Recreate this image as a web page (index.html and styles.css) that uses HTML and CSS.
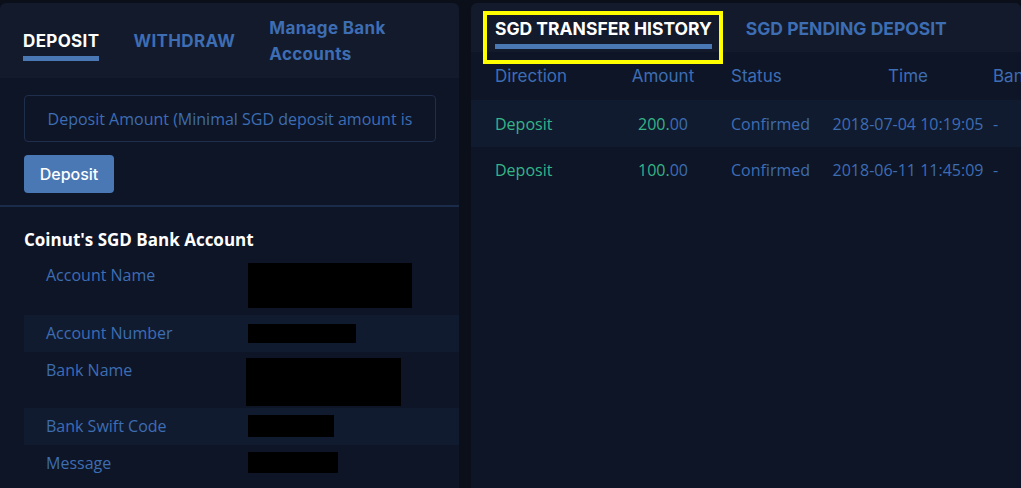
FILE: index.html
```html
<!DOCTYPE html>
<html>
<head>
<meta charset="utf-8">
<link rel="stylesheet" href="styles.css">
</head>
<body>
<div class="page">
  <section class="panel left">
    <div class="tabs tabs-left">
      <div class="tab active">DEPOSIT</div>
      <div class="tab">WITHDRAW</div>
      <div class="tab tab-wrap">Manage Bank Accounts</div>
    </div>
    <div class="deposit-form">
      <div class="input">Deposit Amount (Minimal SGD deposit amount is</div>
      <button class="btn">Deposit</button>
    </div>
    <div class="bank">
      <h2 class="bank-title">Coinut's SGD Bank Account</h2>
      <div class="rows">
        <div class="row row1"><span class="label">Account Name</span><span class="redact r1"></span></div>
        <div class="row alt"><span class="label">Account Number</span><span class="redact r2"></span></div>
        <div class="row row3"><span class="label">Bank Name</span><span class="redact r3"></span></div>
        <div class="row alt row4"><span class="label">Bank Swift Code</span><span class="redact r4"></span></div>
        <div class="row"><span class="label">Message</span><span class="redact r5"></span></div>
      </div>
    </div>
  </section>
  <section class="panel right">
    <div class="tabs tabs-right">
      <div class="tab active highlighted">SGD TRANSFER HISTORY</div>
      <div class="tab">SGD PENDING DEPOSIT</div>
    </div>
    <div class="table">
      <div class="trow thead">
        <div class="c c1">Direction</div>
        <div class="c c2">Amount</div>
        <div class="c c3">Status</div>
        <div class="c c4">Time</div>
        <div class="c c5">Bank</div>
      </div>
      <div class="trow tbody alt">
        <div class="c c1 green">Deposit</div>
        <div class="c c2 green">200.<span class="blue">00</span></div>
        <div class="c c3">Confirmed</div>
        <div class="c c4">2018-07-04 10:19:05</div>
        <div class="c c5">-</div>
      </div>
      <div class="trow tbody">
        <div class="c c1 green">Deposit</div>
        <div class="c c2 green">100.<span class="blue">00</span></div>
        <div class="c c3">Confirmed</div>
        <div class="c c4">2018-06-11 11:45:09</div>
        <div class="c c5">-</div>
      </div>
    </div>
  </section>
</div>
</body>
</html>
```

FILE: styles.css
```css
* { box-sizing: border-box; }
html, body { margin: 0; padding: 0; }
body {
  background: #0b0f19;
  width: 1021px;
  height: 488px;
  overflow: hidden;
  font-family: "Open Sans", sans-serif;
  color: #3d6db3;
}
.page {
  display: flex;
  gap: 12px;
  padding-top: 3px;
  height: 488px;
}
.panel {
  background: #0e1527;
  border-radius: 6px 6px 0 0;
  overflow: hidden;
  height: 485px;
}
.left { width: 459px; flex: none; }
.right { flex: 1; }

.tabs {
  display: flex;
  background: #131a2b;
  font-family: Inter, "Liberation Sans", sans-serif;
  font-weight: 700;
  font-size: 17px;
  color: #3d6db3;
}
.tabs-left {
  height: 75px;
  align-items: center;
  gap: 34px;
  padding-left: 23px;
  letter-spacing: 0.35px;
}
.tab { position: relative; line-height: 26px; }
.tab.active { color: #ffffff; }
.tab.active::after {
  content: "";
  position: absolute;
  left: 0; right: 0;
  height: 5px;
  background: #4a78b5;
}
.tabs-left .tab.active::after { top: 28px; right: 0.35px; }
.tab-wrap { width: 125px; }

.tabs-right {
  height: 49px;
  gap: 34px;
  padding-left: 24px;
  padding-top: 14px;
  font-size: 17.5px;
}
.tabs-right .tab { line-height: 24px; height: 24px; }
.tabs-right .tab.active::after { top: 27px; }
.highlighted::before {
  content: "";
  position: absolute;
  left: -12px; right: -11px;
  top: -6px; height: 45px;
  border: 4px solid #ffff00;
}

.deposit-form {
  padding: 17px 23px 12px 24px;
  border-bottom: 2px solid #1b2c4a;
}
.input {
  height: 47px;
  border: 1px solid #1f2e4b;
  border-radius: 4px;
  display: flex;
  align-items: center;
  justify-content: center;
  font-size: 16px;
  color: #3d6db3;
  white-space: nowrap;
  overflow: hidden;
}
.btn {
  margin-top: 13px;
  width: 90px;
  height: 38px;
  border: none;
  border-radius: 4px;
  background: #4a78b5;
  color: #ffffff;
  font-family: Inter, "Liberation Sans", sans-serif;
  font-weight: 500;
  font-size: 16px;
  padding: 0;
  display: block;
}

.bank { padding: 21px 0 0 24px; }
.bank-title {
  margin: 0 0 4px;
  font-size: 17px;
  line-height: 24px;
  font-weight: 700;
  color: #ffffff;
}
.row {
  display: flex;
  padding: 7px 0;
}
.row.alt { background: #111b30; }
.row1 .label { padding-top: 1px; }
.label {
  width: 224px;
  flex: none;
  padding-left: 22px;
  font-size: 16px;
  line-height: 23px;
  color: #3d6db3;
}
.redact { background: #000; display: block; }
.r1 { width: 164px; height: 45px; }
.r2 { width: 108px; height: 19px; margin-top: 2px; }
.r3 { width: 155px; height: 48px; margin-left: -2px; margin-top: -1px; margin-bottom: -5px; }
.r4 { width: 86px; height: 22px; }
.r5 { width: 90px; height: 21px; }

.table { font-size: 16px; }
.trow {
  display: grid;
  grid-template-columns: 144px 96px 112px 170px 1fr;
  align-items: center;
  white-space: nowrap;
}
.thead {
  height: 48px;
  font-family: Inter, "Liberation Sans", sans-serif;
  font-size: 17px;
}
.tbody { height: 46px; }
.tbody.alt { background: #111b30; height: 47px; }
.c1 { padding-left: 24px; }
.c2 { text-align: center; }
.c3 { padding-left: 20px; }
.c4 { text-align: center; }
.c5 { padding-left: 0; overflow: hidden; }
.green { color: #35b488; }
.blue { color: #3d6db3; }
```
